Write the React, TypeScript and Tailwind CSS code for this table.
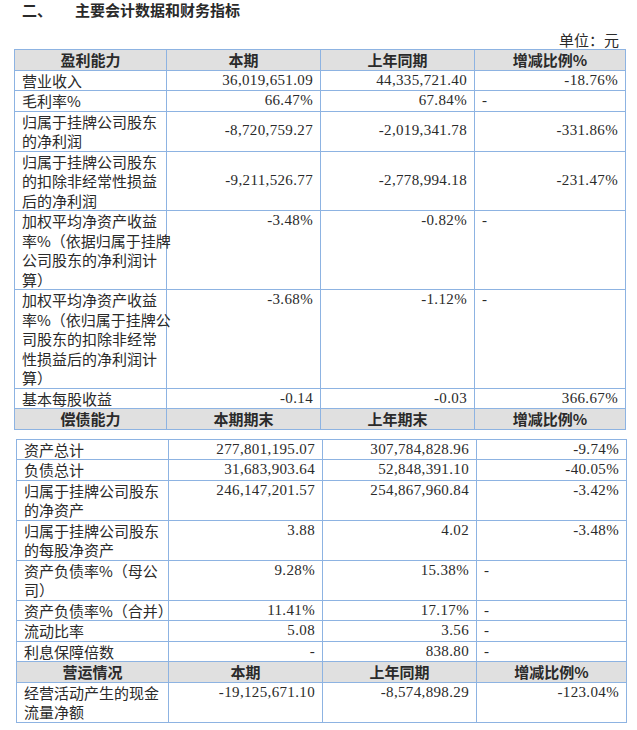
import React from 'react';

type Row = {
  label: string[];
  cur: string;
  prev: string;
  change: string;
  middle?: boolean;
};

type Header = [string, string, string, string];

const profitHeader: Header = ['盈利能力', '本期', '上年同期', '增减比例%'];
const debtHeader: Header = ['偿债能力', '本期期末', '上年期末', '增减比例%'];
const opHeader: Header = ['营运情况', '本期', '上年同期', '增减比例%'];

const profitRows: Row[] = [
  { label: ['营业收入'], cur: '36,019,651.09', prev: '44,335,721.40', change: '-18.76%' },
  { label: ['毛利率%'], cur: '66.47%', prev: '67.84%', change: '-' },
  {
    label: ['归属于挂牌公司股东', '的净利润'],
    cur: '-8,720,759.27',
    prev: '-2,019,341.78',
    change: '-331.86%',
    middle: true,
  },
  {
    label: ['归属于挂牌公司股东', '的扣除非经常性损益', '后的净利润'],
    cur: '-9,211,526.77',
    prev: '-2,778,994.18',
    change: '-231.47%',
    middle: true,
  },
  {
    label: ['加权平均净资产收益', '率%（依据归属于挂牌', '公司股东的净利润计', '算）'],
    cur: '-3.48%',
    prev: '-0.82%',
    change: '-',
  },
  {
    label: ['加权平均净资产收益', '率%（依归属于挂牌公', '司股东的扣除非经常', '性损益后的净利润计', '算）'],
    cur: '-3.68%',
    prev: '-1.12%',
    change: '-',
  },
  { label: ['基本每股收益'], cur: '-0.14', prev: '-0.03', change: '366.67%' },
];

const debtRows: Row[] = [
  { label: ['资产总计'], cur: '277,801,195.07', prev: '307,784,828.96', change: '-9.74%' },
  { label: ['负债总计'], cur: '31,683,903.64', prev: '52,848,391.10', change: '-40.05%' },
  { label: ['归属于挂牌公司股东', '的净资产'], cur: '246,147,201.57', prev: '254,867,960.84', change: '-3.42%' },
  { label: ['归属于挂牌公司股东', '的每股净资产'], cur: '3.88', prev: '4.02', change: '-3.48%' },
  { label: ['资产负债率%（母公', '司）'], cur: '9.28%', prev: '15.38%', change: '-' },
  { label: ['资产负债率%（合并）'], cur: '11.41%', prev: '17.17%', change: '-' },
  { label: ['流动比率'], cur: '5.08', prev: '3.56', change: '-' },
  { label: ['利息保障倍数'], cur: '-', prev: '838.80', change: '-' },
];

const opRows: Row[] = [
  {
    label: ['经营活动产生的现金', '流量净额'],
    cur: '-19,125,671.10',
    prev: '-8,574,898.29',
    change: '-123.04%',
  },
];

const cell = 'border border-[#8db3e2] px-[7px] py-0 leading-[19.5px]';
const num = "font-['Liberation_Serif','Noto_Sans_CJK_SC',serif] tracking-[0.35px] text-[15px]";

function HeaderRow({ cols }: { cols: Header }) {
  return (
    <tr className="bg-[#e0e0e0]">
      {cols.map((c, i) => (
        <th key={i} className={`${cell} text-center font-bold text-[15px]`}>
          {c}
        </th>
      ))}
    </tr>
  );
}

function DataRow({ row }: { row: Row }) {
  const va = row.middle ? 'align-middle' : 'align-top';
  return (
    <tr>
      <td className={`${cell} ${va} text-left`}>
        {row.label.map((l, i) => (
          <div key={i} className="whitespace-nowrap">
            {l}
          </div>
        ))}
      </td>
      <td className={`${cell} ${va} text-right ${num}`}>{row.cur}</td>
      <td className={`${cell} ${va} text-right ${num}`}>{row.prev}</td>
      <td className={`${cell} ${va} ${row.change === '-' ? 'text-left' : 'text-right'} ${num}`}>
        {row.change}
      </td>
    </tr>
  );
}

function Cols({ first }: { first: number }) {
  return (
    <colgroup>
      <col style={{ width: first }} />
      <col className="w-[154px]" />
      <col className="w-[154px]" />
      <col />
    </colgroup>
  );
}

export default function App() {
  return (
    <div className="w-[637px] h-[730px] bg-white text-[#2a2a2a] text-[15px] font-['Noto_Sans_CJK_SC',sans-serif]">
      {/* 标题 */}
      <div className="flex h-[20px] items-center pl-[22px] font-bold text-[15px] leading-[20px]">
        <span className="w-[53px]">二、</span>
        <span>主要会计数据和财务指标</span>
      </div>
      <div className="mt-[10px] pr-[18px] text-right leading-[19px]">单位：元</div>

      {/* 盈利能力 / 偿债能力表头 */}
      <table className="ml-[14px] w-[612px] table-fixed border-collapse">
        <Cols first={152} />
        <tbody>
          <HeaderRow cols={profitHeader} />
          {profitRows.map((r, i) => (
            <DataRow key={i} row={r} />
          ))}
          <HeaderRow cols={debtHeader} />
        </tbody>
      </table>

      {/* 偿债能力 / 营运情况 */}
      <table className="ml-[16px] mt-[9px] w-[611px] table-fixed border-collapse">
        <Cols first={152} />
        <tbody>
          {debtRows.map((r, i) => (
            <DataRow key={i} row={r} />
          ))}
          <HeaderRow cols={opHeader} />
          {opRows.map((r, i) => (
            <DataRow key={i} row={r} />
          ))}
        </tbody>
      </table>
    </div>
  );
}
